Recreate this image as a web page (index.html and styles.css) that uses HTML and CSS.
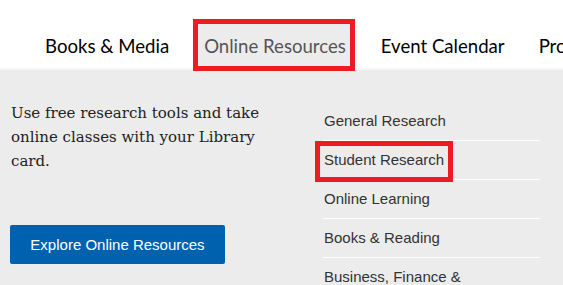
FILE: index.html
```html
<!DOCTYPE html>
<html>
<head>
<meta charset="utf-8">
<link rel="stylesheet" href="styles.css">
</head>
<body>
<header class="topbar">
  <nav class="nav">
    <a class="nav-item">Books &amp; Media</a>
    <a class="nav-item active">Online Resources</a>
    <a class="nav-item">Event Calendar</a>
    <a class="nav-item">Programs</a>
  </nav>
</header>
<section class="panel">
  <div class="intro">
    <p class="lead">Use free research tools and take online classes with your Library card.</p>
    <a class="btn">Explore Online Resources</a>
  </div>
  <ul class="links">
    <li>General Research</li>
    <li class="marked">Student Research</li>
    <li>Online Learning</li>
    <li>Books &amp; Reading</li>
    <li>Business, Finance &amp; Entrepreneurship</li>
  </ul>
</section>
</body>
</html>
```

FILE: styles.css
```css
html, body {
  margin: 0;
  padding: 0;
  background: #ececec;
  overflow: hidden;
}
.topbar {
  background: #fff;
  height: 68px;
  border-bottom: 2px solid #f6f6f6;
}
.nav {
  display: flex;
  align-items: flex-start;
  padding-left: 28px;
  padding-top: 19px;
  white-space: nowrap;
  overflow: hidden;
}
.nav-item {
  font-family: "Lato", sans-serif;
  font-size: 18.6px;
  color: #000;
  padding: 0 17px;
  height: 52px;
  line-height: 54px;
  box-sizing: border-box;
}
.nav-item.active {
  background: #ececec;
  border: 5px solid #ed1c24;
  line-height: 44px;
  color: #555;
  padding: 0 4px 0 6px;
  margin: 0 9px 0 7px;
}
.panel {
  display: grid;
  grid-template-columns: 270px 217px;
  column-gap: 43px;
  padding: 31px 0 0 10px;
}
.lead {
  margin: 0 0 0 1px;
  font-family: "DejaVu Serif", serif;
  font-size: 15px;
  line-height: 24px;
  color: #222;
}
.btn {
  display: inline-block;
  margin-top: 52px;
  width: 215px;
  height: 39px;
  line-height: 39px;
  text-align: center;
  background: #0061ae;
  color: #fff;
  border-radius: 2px;
  font-family: "Liberation Sans", Arial, sans-serif;
  font-size: 15px;
}
.links {
  list-style: none;
  margin: 1px 0 0;
  padding: 0;
  font-family: "Liberation Sans", Arial, sans-serif;
  font-size: 15px;
  color: #333;
}
.links li {
  padding: 10px 1px 11px;
  line-height: 17px;
  border-bottom: 1px solid #fff;
  position: relative;
}
.links li.marked::after {
  content: "";
  position: absolute;
  left: -8px;
  top: 0;
  width: 138px;
  height: 41px;
  border: 5px solid #ed1c24;
  box-sizing: border-box;
}
```
